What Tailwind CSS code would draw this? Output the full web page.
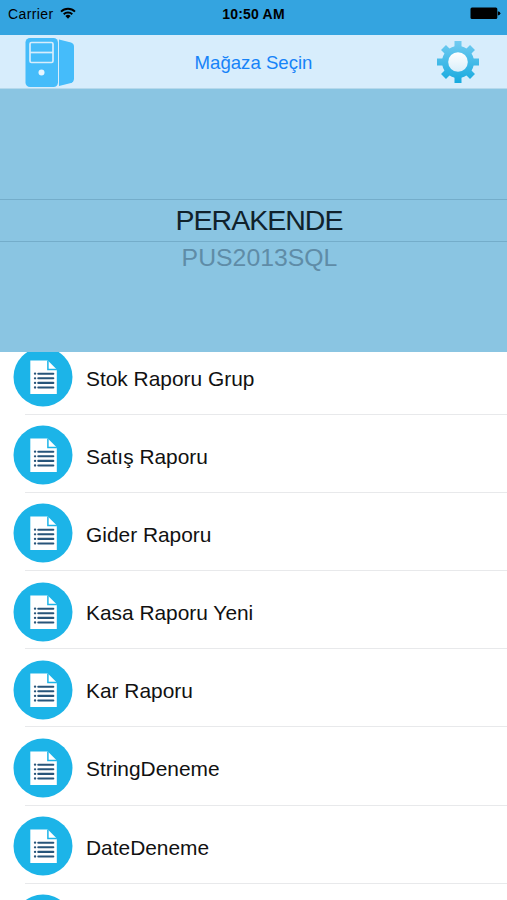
<!DOCTYPE html>
<html lang="tr">
<head>
    <meta charset="UTF-8" />
    <meta name="viewport" content="width=device-width, initial-scale=1.0" />
    <title>Mağaza Seçin</title>
    <script src="https://cdn.jsdelivr.net/npm/@tailwindcss/browser@4"></script>
</head>
<body class="bg-white font-['Liberation_Sans',Arial,sans-serif] text-[#111]">
    <svg class="hidden">
        <symbol id="report" viewBox="0 0 60 60">
            <circle cx="30" cy="30" r="29.5" fill="#1cb4e8" />
            <path d="M17.3 13.5h17.5l9 9V47H17.3z" fill="#fff" />
            <path d="M34.9 13.5v9h9" fill="none" stroke="#1cb4e8" stroke-width="1.5" />
            <path d="M25.3 26.7h15M25.3 31.3h15M25.3 35.9h15M25.3 40.5h15" stroke="#28557a" stroke-width="2.1" stroke-linecap="round" />
            <path d="M22 26.7h.1M22 31.3h.1M22 35.9h.1M22 40.5h.1" stroke="#28557a" stroke-width="2.3" stroke-linecap="round" />
        </symbol>
    </svg>

    <div class="flex h-screen w-full flex-col overflow-hidden">
        <!-- status bar -->
        <div class="grid h-[35px] shrink-0 grid-cols-3 items-start bg-[#34a4e0] pt-[5px] text-black">
            <div class="flex items-center pl-2">
                <span class="text-[14px] leading-[18px] tracking-[0.4px]">Carrier</span>
                <svg class="-mt-0.5 ml-[6px] h-[12px] w-[16px]" viewBox="0 0 16 12">
                    <path d="M1 4.6a10 10 0 0 1 14 0M3.7 7.3a6.2 6.2 0 0 1 8.6 0" fill="none" stroke="#000" stroke-width="1.9" />
                    <path d="M5.4 9.1a3.7 3.7 0 0 1 5.2 0L8 11.7z" />
                </svg>
            </div>
            <span class="text-center text-[14px] leading-[18px] font-bold tracking-[0.2px]">10:50 AM</span>
            <svg class="mt-[2px] mr-[6px] h-[13px] w-[31px] justify-self-end" viewBox="0 0 31 13">
                <rect x=".5" y=".5" width="26.8" height="11.5" rx="1.5" />
                <path d="M27.8 4.2q2.6.3 2.6 2.1t-2.6 2.1z" />
            </svg>
        </div>

        <!-- toolbar -->
        <div class="grid h-[54px] shrink-0 grid-cols-3 items-center border-b border-[#b5d9ec] bg-[#d7edfc]">
            <svg class="ml-[24px] h-[52px] w-[52px]" viewBox="0 0 52 52">
                <path d="M35 3.5l12 3q3 1 3 4v32q0 3-3 4.5l-12 3z" fill="#45bcfa" />
                <rect x="1.5" y="2" width="32.5" height="49" rx="4.5" fill="#45bcfa" />
                <rect x="6" y="6.5" width="23" height="20" rx="1.5" fill="none" stroke="#d7edfc" stroke-width="1.7" />
                <path d="M6 16.5h23" stroke="#d7edfc" stroke-width="1.7" />
                <circle cx="17.5" cy="36.5" r="3" fill="#e6f5ff" />
            </svg>
            <button class="pt-[2px] text-center text-[18.6px] leading-6 text-[#1683f8]">Mağaza Seçin</button>
            <svg class="mr-[27px] h-[44px] w-[44px] justify-self-end" viewBox="-22 -22 44 44">
                <defs>
                    <linearGradient id="gear" gradientUnits="userSpaceOnUse" x1="0" y1="-21" x2="0" y2="21">
                        <stop offset="0" stop-color="#72cbf1" />
                        <stop offset="1" stop-color="#16aadf" />
                    </linearGradient>
                    <linearGradient id="hub" x1="0" y1="0" x2="0" y2="1">
                        <stop offset="0" stop-color="#ffffff" />
                        <stop offset="1" stop-color="#d9eefa" />
                    </linearGradient>
                </defs>
                <g fill="none" stroke="url(#gear)">
                    <circle r="12.5" stroke-width="7" />
                    <path d="M0-21V-14M0 21V14M-21 0H-14M21 0H14M-14.5-14.5L-10-10M14.5-14.5L10-10M-14.5 14.5L-10 10M14.5 14.5L10 10" stroke-width="7" />
                </g>
                <circle r="9.8" fill="url(#hub)" />
            </svg>
        </div>

        <!-- store picker -->
        <div class="flex h-[263px] shrink-0 flex-col bg-[#8ac5e2] pt-[110px] text-center">
            <div class="h-[43px] border-y border-[#74adca] pl-[11px] text-[28.5px] leading-[41px] tracking-[-1px] text-[#10222c]">PERAKENDE</div>
            <div class="h-[32px] pl-3 text-[24.8px] leading-[31px] text-[#5f8ca7]">PUS2013SQL</div>
        </div>

        <!-- report list -->
        <div class="min-h-0 flex-1 overflow-hidden">
            <ul id="reports" class="-mt-[15.3px] text-[20.9px]"></ul>
        </div>
    </div>

    <script>
        const reports = [
            'Stok Raporu Grup',
            'Satış Raporu',
            'Gider Raporu',
            'Kasa Raporu Yeni',
            'Kar Raporu',
            'StringDeneme',
            'DateDeneme',
            ''
        ];

        document.getElementById('reports').innerHTML = reports.map(name => `
            <li class="h-[78.17px]">
                <div class="flex h-[77.17px] items-center pl-[13px]">
                    <svg class="mt-[3.5px] size-[60px] shrink-0"><use href="#report" /></svg>
                    <span class="ml-[13px] pt-[6px]">${name}</span>
                </div>
                <div class="ml-[25px] h-px bg-[#e8e9eb]"></div>
            </li>`).join('');
    </script>
</body>
</html>
